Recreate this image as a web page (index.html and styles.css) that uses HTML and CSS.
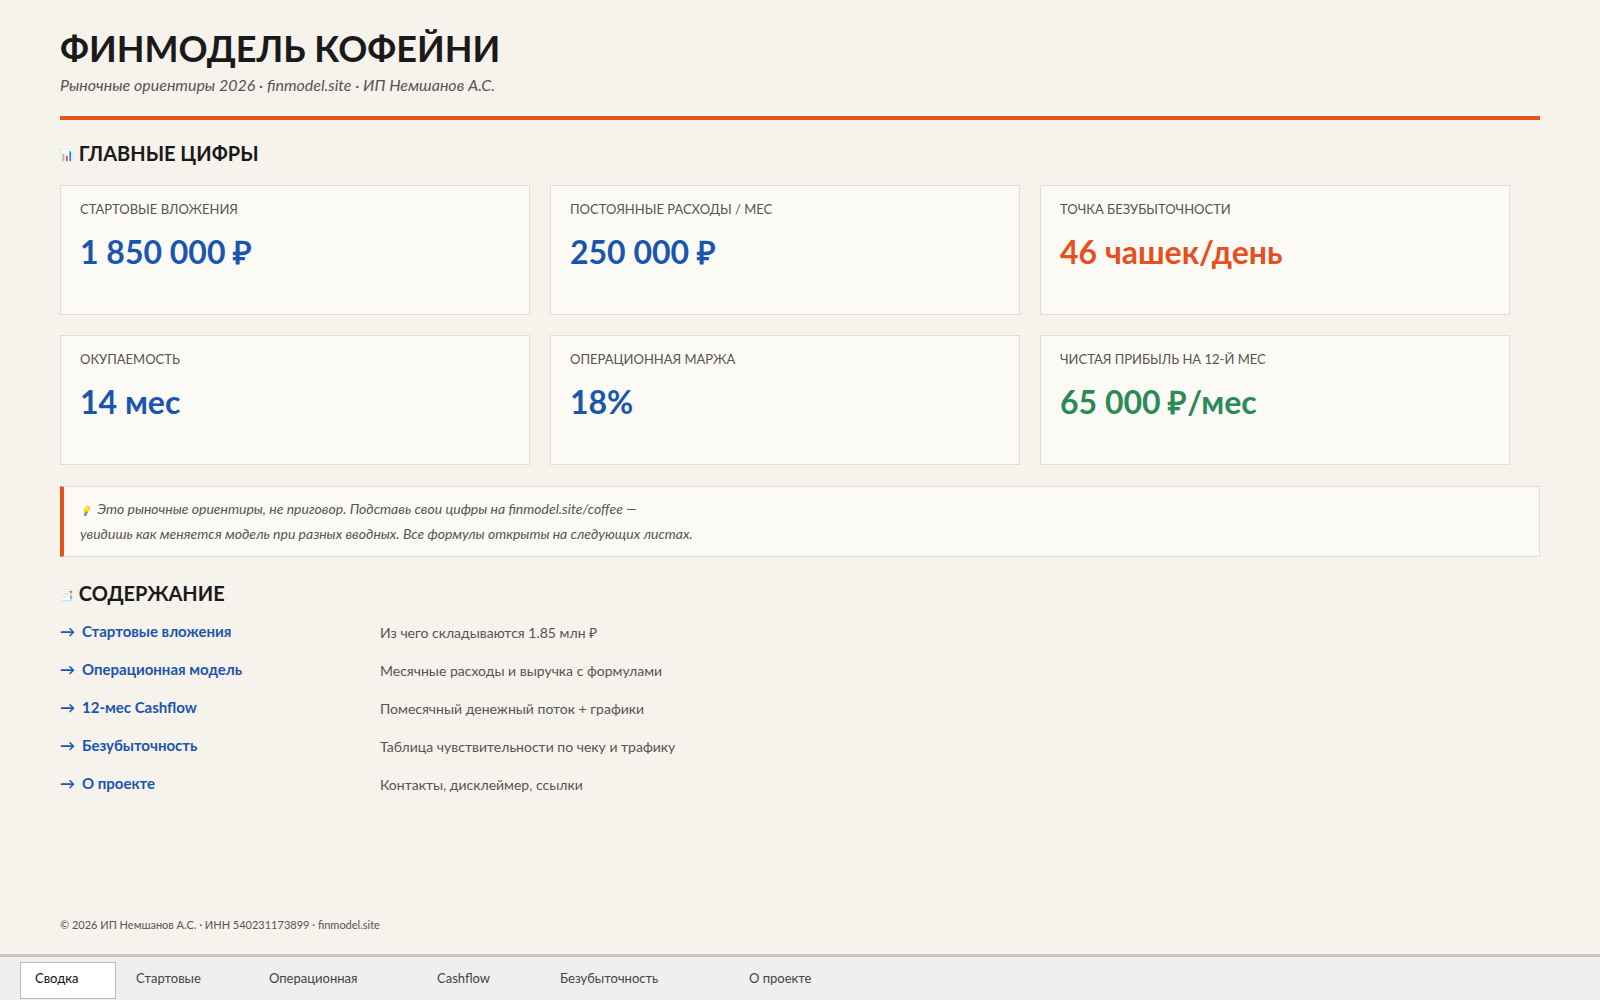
FILE: index.html
```html
<!DOCTYPE html>
<html lang="ru">
<head>
    <meta charset="UTF-8">
    <meta name="viewport" content="width=device-width, initial-scale=1.0">
    <title>Финмодель кофейни</title>
    <link rel="stylesheet" href="styles.css">
</head>
<body>
    <div class="page">
        <header class="head">
            <h1 class="title">ФИНМОДЕЛЬ КОФЕЙНИ</h1>
            <p class="subtitle">Рыночные ориентиры 2026 · finmodel.site · ИП Немшанов А.С.</p>
        </header>

        <h2 class="section"><span class="ico">📊</span> ГЛАВНЫЕ ЦИФРЫ</h2>
        <div class="cards">
            <div class="card">
                <div class="label">Стартовые вложения</div>
                <div class="value blue">1 850 000 ₽</div>
            </div>
            <div class="card">
                <div class="label">Постоянные расходы / мес</div>
                <div class="value blue">250 000 ₽</div>
            </div>
            <div class="card">
                <div class="label">Точка безубыточности</div>
                <div class="value orange">46 чашек/день</div>
            </div>
            <div class="card">
                <div class="label">Окупаемость</div>
                <div class="value blue">14 мес</div>
            </div>
            <div class="card">
                <div class="label">Операционная маржа</div>
                <div class="value blue">18%</div>
            </div>
            <div class="card">
                <div class="label">Чистая прибыль на 12-й мес</div>
                <div class="value green">65 000 ₽/мес</div>
            </div>
        </div>

        <div class="note">
            <span class="note-ico">💡</span> Это рыночные ориентиры, не приговор. Подставь свои цифры на finmodel.site/coffee —<br>
            увидишь как меняется модель при разных вводных. Все формулы открыты на следующих листах.
        </div>

        <h2 class="section toc-title"><span class="ico">📑</span> СОДЕРЖАНИЕ</h2>
        <div class="toc">
            <a class="toc-link" href="#"><span class="arrow">→</span>Стартовые вложения</a>
            <span class="toc-desc">Из чего складываются 1.85 млн ₽</span>
            <a class="toc-link" href="#"><span class="arrow">→</span>Операционная модель</a>
            <span class="toc-desc">Месячные расходы и выручка с формулами</span>
            <a class="toc-link" href="#"><span class="arrow">→</span>12-мес Cashflow</a>
            <span class="toc-desc">Помесячный денежный поток + графики</span>
            <a class="toc-link" href="#"><span class="arrow">→</span>Безубыточность</a>
            <span class="toc-desc">Таблица чувствительности по чеку и трафику</span>
            <a class="toc-link" href="#"><span class="arrow">→</span>О проекте</a>
            <span class="toc-desc">Контакты, дисклеймер, ссылки</span>
        </div>

        <footer class="footer">© 2026 ИП Немшанов А.С. · ИНН 540231173899 · finmodel.site</footer>
    </div>

    <nav class="tabs">
        <span class="tab active">Сводка</span>
        <span class="tab">Стартовые</span>
        <span class="tab">Операционная</span>
        <span class="tab">Cashflow</span>
        <span class="tab">Безубыточность</span>
        <span class="tab">О проекте</span>
    </nav>
</body>
</html>
```

FILE: styles.css
```css
html, body {
    margin: 0;
    height: 100%;
}

body {
    display: flex;
    flex-direction: column;
    background-color: #f6f2ec;
    font-family: Lato, "Open Sans", sans-serif;
    color: #1a1a1a;
}

.page {
    flex: 1;
    display: flex;
    flex-direction: column;
    padding: 27px 60px 0 60px;
}

.head {
    border-bottom: 4px solid #e5531f;
    padding-bottom: 22px;
}

.title {
    margin: 0;
    font-size: 36px;
    line-height: 1.2;
    font-weight: 700;
    color: #1a1a1a;
}

.subtitle {
    margin: 5px 0 0 0;
    font-size: 16px;
    line-height: 19px;
    font-style: italic;
    color: #555;
}

.section {
    margin: 21px 0 0 0;
    height: 24px;
    font-size: 20px;
    line-height: 24px;
    font-weight: 700;
    color: #1a1a1a;
}

.ico {
    font-size: 11px;
    line-height: 1;
    vertical-align: 2px;
}

.cards {
    display: grid;
    grid-template-columns: repeat(3, 470px);
    gap: 20px;
    margin-top: 20px;
}

.card {
    box-sizing: border-box;
    height: 130px;
    padding: 15px 19px;
    background-color: #fcfaf4;
    border: 1px solid #e3ded5;
}

.label {
    font-size: 13px;
    line-height: 16px;
    text-transform: uppercase;
    color: #555;
}

.value {
    margin-top: 16px;
    font-size: 32px;
    line-height: 38px;
    font-weight: 700;
}

.blue {
    color: #1a56ad;
}

.orange {
    color: #e5501e;
}

.green {
    color: #2c8a57;
}

.note {
    margin-top: 21px;
    padding: 9px 16px 10px 16px;
    background-color: #fcfaf4;
    border: 1px solid #e3ded5;
    border-left: 4px solid #e5531f;
    font-size: 14px;
    line-height: 25px;
    font-style: italic;
    color: #555;
}

.note-ico {
    font-size: 9px;
    line-height: 1;
    margin-right: 3px;
}

.toc-title {
    margin-top: 24px;
}

.toc {
    display: grid;
    grid-template-columns: 320px auto;
    grid-auto-rows: 38px;
    align-items: center;
    margin-top: 8px;
}

.toc-link {
    font-size: 15px;
    font-weight: 700;
    color: #1a56ad;
    text-decoration: none;
    margin-top: -3px;
}

.arrow {
    display: inline-block;
    width: 22px;
}

.toc-desc {
    font-size: 14px;
    color: #555;
    margin-top: 1px;
}

.footer {
    margin-top: auto;
    margin-bottom: 22px;
    font-size: 11px;
    line-height: 14px;
    color: #555;
}

.tabs {
    display: grid;
    grid-template-columns: 96px 128px 163px 118px 184px 100px;
    gap: 5px;
    height: 38px;
    padding: 5px 20px 0 20px;
    background-color: #efefef;
    border-top: 3px solid #c9c7c3;
}

.tab {
    box-sizing: border-box;
    height: 37px;
    padding: 8px 15px 0 15px;
    font-size: 13px;
    line-height: 16px;
    color: #444;
}

.tab.active {
    background-color: #fff;
    border: 1px solid #bbb;
    padding: 7px 14px 0 14px;
    color: #111;
}
```
